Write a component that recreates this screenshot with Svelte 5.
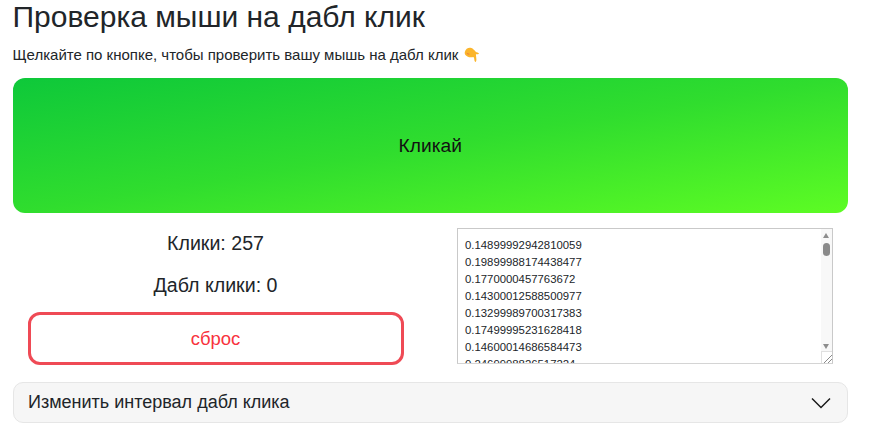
<script>
  const times = ['0.14899992942810059','0.19899988174438477','0.1770000457763672','0.14300012588500977','0.13299989700317383','0.17499995231628418','0.14600014686584473','0.2469998826517224'];
</script>

<main class="page">
  <h1>Проверка мыши на дабл клик</h1>
  <p class="lead">Щелкайте по кнопке, чтобы проверить вашу мышь на дабл клик
    <svg class="emoji" width="16" height="16" viewBox="0 0 16 16" aria-hidden="true">
      <path d="M.8 5C1.500 2 4 .5 6.500.8c2.500.3 4 2.700 5.200 4 .6.600 1.800.700 2.700 1.100.8.400.6 1.100-.4 1.300-.7.100-1.600 0-2.100.1l.5 5.200c.1 1.100-.4 2.500-1 2.400-.7 0-1-1.300-1.100-2.300-.1-1-.3-2.100-.9-2.600-1.700.4-4.200.5-6-.6C1.100 8.500.4 6.700.8 5Z" fill="#fbb52b"/>
      <path d="M2.800 6.300c.8.700 1.600.900 2.600.8" stroke="#ef7a3c" stroke-width="1" fill="none"/>
    </svg>
  </p>
  <button class="click">Кликай</button>
  <section class="stats">
    <div class="left">
      <div class="stat">Клики: 257</div>
      <div class="stat">Дабл клики: 0</div>
      <button class="reset">сброс</button>
    </div>
    <div class="right">
      <div class="log">
        {#each times as t}<div>{t}</div>{/each}
        <div class="bar" aria-hidden="true">
          <span class="up"></span>
          <span class="thumb"></span>
          <span class="down"></span>
        </div>
        <svg class="grip" width="10" height="11" viewBox="0 0 10 11" aria-hidden="true">
          <path d="M2 11 10 3M6 11l4-4" stroke="#8a8a8a" stroke-width="1" fill="none"/>
        </svg>
      </div>
    </div>
  </section>
  <div class="accordion">
    <span>Изменить интервал дабл клика</span>
    <svg width="20" height="12" viewBox="0 0 20 12" aria-hidden="true">
      <path d="M1 1.500 10 10.500 19 1.500" stroke="#1a1a1a" stroke-width="1.500" fill="none"/>
    </svg>
  </div>
</main>

<style>
  :global(body) { margin: 0; background: #fff; }
  .page {
    box-sizing: border-box;
    width: 860px;
    height: 439px;
    overflow: hidden;
    padding: 0 12px 0 12.500px;
    font-family: "Liberation Sans", Arial, sans-serif;
    color: #212529;
  }
  h1 {
    margin: 0;
    font-size: 30px;
    font-weight: 400;
    line-height: 33px;
  }
  .lead {
    margin: 10px 0 11px;
    font-size: 15px;
    line-height: 24px;
    height: 24px;
    white-space: nowrap;
  }
  .emoji { vertical-align: -3px; margin-left: 1px; }
  .click {
    display: block;
    width: 100%;
    height: 135px;
    border: 0;
    border-radius: 12px;
    background: linear-gradient(to bottom right, #0ec83a 0%, #30dd2e 50%, #5dfc24 100%);
    font: 19.200px "Liberation Sans", Arial, sans-serif;
    color: #111;
    padding: 0;
  }
  .stats { display: flex; margin-top: 15px; }
  .left {
    width: 406px;
    padding: 0 15px;
    box-sizing: border-box;
    text-align: center;
    font-size: 19.600px;
  }
  .stat { line-height: 29px; margin-bottom: 13px; height: 29px; }
  .stat:first-child { margin-top: 1px; }
  .reset {
    display: block;
    width: 100%;
    height: 53px;
    margin-top: -1px;
    background: #fff;
    border: 3px solid #ef4a55;
    border-radius: 12px;
    color: #f8323d;
    font: 18.500px "Liberation Sans", Arial, sans-serif;
    padding: 0;
  }
  .right { margin-left: 38.500px; }
  .log {
    position: relative;
    box-sizing: border-box;
    width: 376px;
    height: 136px;
    overflow: hidden;
    border: 1px solid #c9c9c9;
    border-bottom-color: #d4d4d4;
    padding: 8px 7px;
    font-size: 11.350px;
    line-height: 17px;
    color: #212529;
  }
  .bar {
    position: absolute;
    top: 0;
    right: 0;
    bottom: 0;
    width: 11px;
    background: #f8f8f8;
  }
  .up, .down {
    position: absolute;
    left: 2px;
    width: 0;
    height: 0;
    border-left: 3.500px solid transparent;
    border-right: 3.500px solid transparent;
  }
  .up { top: 4px; border-bottom: 5px solid #8d8d8d; }
  .down { bottom: 14px; border-top: 5px solid #8d8d8d; }
  .thumb {
    position: absolute;
    top: 14px;
    left: 2px;
    width: 7px;
    height: 13px;
    border-radius: 4px;
    background: #8a8a8a;
  }
  .grip {
    position: absolute;
    right: 0;
    bottom: 0;
    background: #fff;
    border-left: 1px solid #e0e0e0;
    border-top: 1px solid #e0e0e0;
  }
  .accordion {
    box-sizing: border-box;
    display: flex;
    align-items: center;
    justify-content: space-between;
    margin-top: 17px;
    height: 41px;
    padding: 0 16px 0 14.500px;
    background: #f6f6f6;
    border: 1px solid #e6e6e6;
    border-radius: 10px;
    font-size: 18px;
    color: #212529;
  }
</style>
